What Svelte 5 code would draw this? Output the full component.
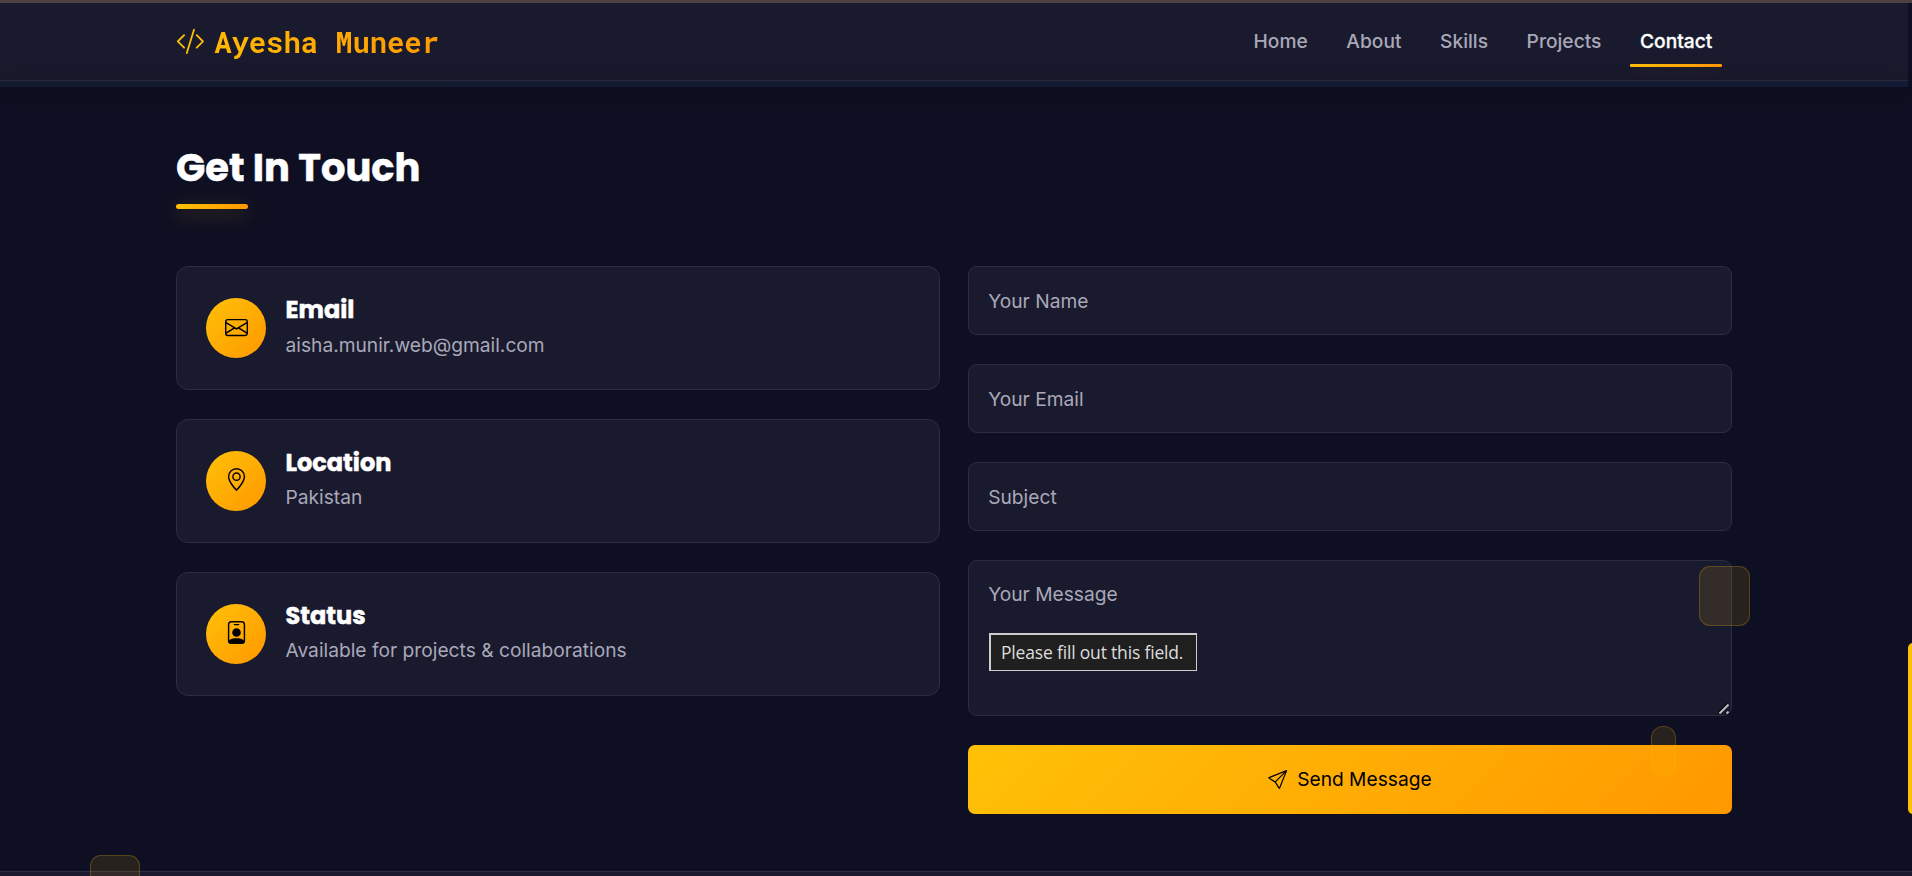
<script>
  const links = ['Home', 'About', 'Skills', 'Projects', 'Contact'];
  const active = 'Contact';
  const icons = {
    envelope: ['M0 4a2 2 0 0 1 2-2h12a2 2 0 0 1 2 2v8a2 2 0 0 1-2 2H2a2 2 0 0 1-2-2zm2-1a1 1 0 0 0-1 1v.217l7 4.2 7-4.2V4a1 1 0 0 0-1-1zm13 2.383-4.708 2.825L15 11.105zm-.034 6.876-5.64-3.471L8 9.583l-1.326-.795-5.64 3.47A1 1 0 0 0 2 13h12a1 1 0 0 0 .966-.741M1 11.105l4.708-2.897L1 5.383z'],
    geo: ['M12.166 8.94c-.524 1.062-1.234 2.12-1.96 3.07A32 32 0 0 1 8 14.58a32 32 0 0 1-2.206-2.57c-.726-.95-1.436-2.008-1.96-3.07C3.304 7.867 3 6.862 3 6a5 5 0 0 1 10 0c0 .862-.305 1.867-.834 2.94M8 16s6-5.686 6-10A6 6 0 0 0 2 6c0 4.314 6 10 6 10', 'M8 8a2 2 0 1 1 0-4 2 2 0 0 1 0 4m0 1a3 3 0 1 0 0-6 3 3 0 0 0 0 6'],
    badge: ['M6.5 2a.5.5 0 0 0 0 1h3a.5.5 0 0 0 0-1zM11 8a3 3 0 1 1-6 0 3 3 0 0 1 6 0', 'M4.5 0A2.5 2.5 0 0 0 2 2.5V14a2 2 0 0 0 2 2h8a2 2 0 0 0 2-2V2.5A2.5 2.5 0 0 0 11.5 0zM3 2.5A1.5 1.5 0 0 1 4.5 1h7A1.5 1.5 0 0 1 13 2.5v10.795a4.2 4.2 0 0 0-.776-.492C11.392 12.387 10.063 12 8 12s-3.392.387-4.224.803a4.2 4.2 0 0 0-.776.492z']
  };
  const cards = [
    { title: 'Email', text: 'aisha.munir.web@gmail.com', icon: icons.envelope },
    { title: 'Location', text: 'Pakistan', icon: icons.geo },
    { title: 'Status', text: 'Available for projects & collaborations', icon: icons.badge }
  ];
</script>

<div class="page">
  <div class="strip"></div>
  <header>
    <div class="container bar">
      <div class="logo">
        <svg viewBox="0 0 16 16" width="28.8" height="28.8">
          <defs><linearGradient id="gold" x1="0" x2="1"><stop offset="0" stop-color="#ffc107" /><stop offset="1" stop-color="#ffbb06" /></linearGradient></defs>
          <path fill="url(#gold)" d="M10.478 1.647a.5.5 0 1 0-.956-.294l-4 13a.5.5 0 0 0 .956.294zM4.854 4.146a.5.5 0 0 1 0 .708L1.707 8l3.147 3.146a.5.5 0 0 1-.708.708l-3.5-3.5a.5.5 0 0 1 0-.708l3.5-3.5a.5.5 0 0 1 .708 0m6.292 0a.5.5 0 0 0 0 .708L14.293 8l-3.147 3.146a.5.5 0 0 0 .708.708l3.5-3.5a.5.5 0 0 0 0-.708l-3.5-3.5a.5.5 0 0 0-.708 0" />
        </svg>
        <span class="name">Ayesha Muneer</span>
      </div>
      <nav>
        {#each links as link}
          <a class:active={link === active} href="#{link.toLowerCase()}">{link}</a>
        {/each}
      </nav>
    </div>
  </header>
  <div class="edge"></div>

  <main class="container">
    <h2>Get In Touch</h2>
    <div class="rule"></div>
    <div class="columns">
      <div class="stack">
        {#each cards as card}
          <article>
            <div class="disc">
              <svg viewBox="0 0 16 16" width="23.04" height="23.04">
                {#each card.icon as d}<path {d} />{/each}
              </svg>
            </div>
            <div class="info">
              <h3>{card.title}</h3>
              <p>{card.text}</p>
            </div>
          </article>
        {/each}
      </div>
      <form class="stack">
        <input type="text" placeholder="Your Name" />
        <input type="email" placeholder="Your Email" />
        <input type="text" placeholder="Subject" />
        <div class="message">
          <textarea placeholder="Your Message"></textarea>
          <svg class="grip" viewBox="0 0 11 11" width="11" height="11">
            <path d="M0 9.5 9.5 0M7 10.5 10.5 7" stroke="#08080c" stroke-width="1.5" />
            <path d="M1.5 10.5 10.5 1.5M8.5 10.5 10.5 8.5" stroke="#b9b9c0" stroke-width="2" />
          </svg>
          <div class="tip">Please fill out this field.</div>
        </div>
        <button type="button">
          <svg viewBox="0 0 16 16" width="19.2" height="19.2"><path d="M15.854.146a.5.5 0 0 1 .11.54l-5.819 14.547a.75.75 0 0 1-1.329.124l-3.178-4.995L.643 7.184a.75.75 0 0 1 .124-1.33L15.314.037a.5.5 0 0 1 .54.11ZM6.636 10.07l2.761 4.338L14.13 2.576zm6.787-8.201L1.591 6.602l4.339 2.76z" /></svg>
          <span>Send Message</span>
        </button>
      </form>
    </div>
  </main>
  <footer></footer>

  <i class="float one"></i>
  <i class="float two"></i>
  <i class="float three"></i>
  <i class="thumb"></i>
</div>

<style>
  :global(body) { background: #0e0f22; overflow: hidden; }
  .page {
    position: relative;
    display: flex;
    flex-direction: column;
    height: 876px;
    overflow: hidden;
    background: #0e0f22;
    color: #fff;
    font-family: Inter, sans-serif;
    font-size: 19.2px;
  }
  .page *, .page { box-sizing: border-box; }
  .container { width: 1556px; margin-left: 176px; }
  .strip { flex: none; height: 3px; background: #4e4043; }
  header {
    flex: none;
    width: 1908px;
    height: 78px;
    background: #1a1a2e;
    border-bottom: 1px solid #312e42;
  }
  .edge {
    flex: none;
    width: 1908px;
    height: 6px;
    background: linear-gradient(90deg, #151b2f, #121b33);
    box-shadow: 0 4px 20px rgba(14, 10, 20, .7);
  }
  .bar { display: flex; justify-content: space-between; height: 77px; }
  .logo { display: flex; padding-top: 24px; gap: 9.2px; }
  .logo svg { margin-left: 0.3px; }
  .name {
    height: 36px;
    margin-top: -1px;
    font: 700 28.8px/32px "Roboto Mono", "DejaVu Sans Mono", monospace;
    background: linear-gradient(120deg, #ffbb05, #ff9800);
    -webkit-background-clip: text;
    background-clip: text;
    color: transparent;
  }
  nav { display: flex; gap: 19.2px; padding: 16px 10px 0 0; }
  a {
    height: 48px;
    padding: 0 9.7px;
    font-size: 19.2px;
    line-height: 44px;
    font-weight: 500;
    color: #a9a8b9;
    text-decoration: none;
  }
  a.active { color: #fff; -webkit-text-stroke: 0.3px #fff; }
  a.active::after {
    content: "";
    display: block;
    height: 3px;
    margin: 1px -9.6px 0;
    background: linear-gradient(90deg, #ffc107, #ff9800);
    border-radius: 1px;
    box-shadow: 0 4px 15px rgba(255, 193, 7, .12);
  }
  h2 { margin: 58px 0 0; height: 59px; font: 700 38.4px/45px Poppins, Inter, sans-serif; letter-spacing: 0.03px; -webkit-text-stroke: 0.5px #fff; white-space: nowrap; }
  .rule {
    width: 72px;
    height: 5px;
    border-radius: 3px;
    background: linear-gradient(90deg, #ffc107, #ff9800);
    box-shadow: 0 4px 20px rgba(255, 193, 7, .3);
  }
  .columns { display: grid; grid-template-columns: 1fr 1fr; gap: 28px; margin-top: 57px; align-items: start; }
  .stack { display: flex; flex-direction: column; gap: 28.8px; }
  article {
    display: flex;
    gap: 19.5px;
    height: 124px;
    padding: 31px 29px;
    background: #1a1a2e;
    border: 1px solid #2d2d40;
    border-radius: 12px;
  }
  .disc {
    display: flex;
    justify-content: center;
    width: 60px;
    height: 60px;
    padding: 17.5px 0 0 1px;
    border-radius: 50%;
    background: linear-gradient(135deg, #ffc107, #ff9800);
  }
  h3 { margin: -2px 0 0; height: 33px; font: 700 24px/28px Poppins, Inter, sans-serif; -webkit-text-stroke: 0.5px #fff; }
  p { margin: -1.4px 0 0; line-height: 34px; color: #a9a8b9; }
  input, textarea {
    display: block;
    width: 100%;
    height: 69.2px;
    margin: 0;
    padding: 0 19.2px;
    background: #1a1a2e;
    border: 1px solid #2d2d40;
    border-radius: 9px;
    outline: 0;
    color: #fff;
    font: 19.2px Inter, sans-serif;
  }
  textarea { height: 156px; padding: 19.2px; line-height: 28.8px; resize: none; }
  ::placeholder { color: #a9a8b9; opacity: 1; }
  .message { position: relative; }
  .grip { position: absolute; right: 3px; bottom: 2px; }
  .tip {
    position: absolute;
    left: 21px;
    top: 73px;
    width: 208px;
    height: 38px;
    padding-left: 10px;
    border: solid #ccc;
    border-width: 2px 1px 1px 2px;
    background: #1f1f1f;
    color: #ddd;
    font: 17.5px/35px "Segoe UI", "Open Sans", sans-serif;
    letter-spacing: -0.18px;
    white-space: nowrap;
  }
  button {
    display: flex;
    align-items: center;
    justify-content: center;
    gap: 9.6px;
    height: 69px;
    border: 0;
    border-radius: 7px;
    background: linear-gradient(135deg, #ffc107, #ff9800);
    color: #000;
    font: 19.2px Inter, sans-serif;
  }
  footer { flex: none; height: 5px; margin-top: auto; border-top: 1px solid #2f2d42; background: #19182d; }
  .float {
    position: absolute;
    background: rgba(255, 193, 7, .11);
    border: 1px solid rgba(255, 193, 7, .22);
    border-radius: 11px;
  }
  .one { left: 1699px; top: 566px; width: 51px; height: 60px; }
  .two { left: 1651px; top: 726px; width: 25px; height: 50px; border-radius: 12px; }
  .three { left: 90px; top: 855px; width: 50px; height: 50px; }
  .thumb { position: absolute; left: 1908px; top: 643px; width: 12px; height: 171px; border-radius: 5px; background: #ffc107; }
</style>
